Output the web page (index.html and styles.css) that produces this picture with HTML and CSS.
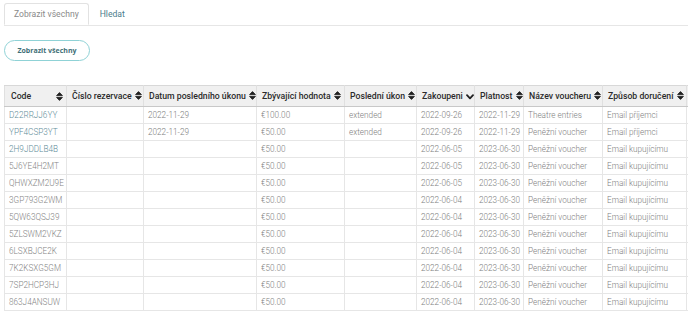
FILE: index.html
```html
<!DOCTYPE html>
<html lang="cs">
<head>
  <meta charset="UTF-8" />
  <title>Vouchery</title>
  <link rel="stylesheet" href="styles.css">
</head>
<body>
  <nav class="tabs">
    <a class="tab active" href="#">Zobrazit všechny</a>
    <a class="tab" href="#">Hledat</a>
  </nav>

  <div class="actions">
    <button class="btn-outline">Zobrazit všechny</button>
  </div>

  <div class="table-wrap">
    <table class="vouchers">
      <colgroup>
        <col style="width:62px"><col style="width:77px"><col style="width:113px"><col style="width:88px">
        <col style="width:72px"><col style="width:58px"><col style="width:49px"><col style="width:79px">
        <col style="width:84px"><col style="width:80px">
      </colgroup>
      <thead>
        <tr>
          <th class="code-head"><span>Code</span><i class="sort"></i></th>
          <th>Číslo rezervace <i class="sort"></i></th>
          <th>Datum posledního úkonu <i class="sort"></i></th>
          <th>Zbývající hodnota <i class="sort"></i></th>
          <th>Poslední úkon <i class="sort"></i></th>
          <th>Zakoupeni <i class="sort desc"></i></th>
          <th>Platnost <i class="sort"></i></th>
          <th>Název voucheru <i class="sort"></i></th>
          <th>Způsob doručení <i class="sort"></i></th>
          <th></th>
        </tr>
      </thead>
      <tbody id="rows"></tbody>
    </table>
  </div>

  <script>
    const rows = [
      ["D22RRJJ6YY", "", "2022-11-29", "€100.00", "extended", "2022-09-26", "2022-11-29", "Theatre entries", "Email příjemci"],
      ["YPF4CSP3YT", "", "2022-11-29", "€50.00", "extended", "2022-09-26", "2022-11-29", "Peněžní voucher", "Email příjemci"],
      ["2H9JDDLB4B", "", "", "€50.00", "", "2022-06-05", "2023-06-30", "Peněžní voucher", "Email kupujícímu"],
      ["5J6YE4H2MT", "", "", "€50.00", "", "2022-06-05", "2023-06-30", "Peněžní voucher", "Email kupujícímu"],
      ["QHWXZM2U9E", "", "", "€50.00", "", "2022-06-05", "2023-06-30", "Peněžní voucher", "Email kupujícímu"],
      ["3GP793G2WM", "", "", "€50.00", "", "2022-06-04", "2023-06-30", "Peněžní voucher", "Email kupujícímu"],
      ["5QW63QSJ39", "", "", "€50.00", "", "2022-06-04", "2023-06-30", "Peněžní voucher", "Email kupujícímu"],
      ["5ZLSWM2VKZ", "", "", "€50.00", "", "2022-06-04", "2023-06-30", "Peněžní voucher", "Email kupujícímu"],
      ["6LSXBJCE2K", "", "", "€50.00", "", "2022-06-04", "2023-06-30", "Peněžní voucher", "Email kupujícímu"],
      ["7K2KSXG5GM", "", "", "€50.00", "", "2022-06-04", "2023-06-30", "Peněžní voucher", "Email kupujícímu"],
      ["7SP2HCP3HJ", "", "", "€50.00", "", "2022-06-04", "2023-06-30", "Peněžní voucher", "Email kupujícímu"],
      ["863J4ANSUW", "", "", "€50.00", "", "2022-06-04", "2023-06-30", "Peněžní voucher", "Email kupujícímu"]
    ];

    const tbody = document.getElementById("rows");
    rows.forEach((r, n) => {
      const tr = document.createElement("tr");
      const codeClass = n < 3 ? "code new" : "code";
      tr.innerHTML = r.map((v, i) => `<td${i === 0 ? ` class="${codeClass}"` : ''}>${v}</td>`).join('') + '<td></td>';
      tbody.appendChild(tr);
    });

    const updown = '<svg width="7" height="9" viewBox="0 0 7 9"><path d="M3.5 0.6 L6.4 3.6 H0.6 Z M3.5 8.4 L6.4 5.4 H0.6 Z" fill="#222" stroke="#222" stroke-width="0.9" stroke-linejoin="round"/></svg>';
    const down = '<svg width="8" height="6" viewBox="0 0 8 6"><path d="M1 1.2 L4 4.4 L7 1.2" fill="none" stroke="#222" stroke-width="1.8" stroke-linecap="round" stroke-linejoin="round"/></svg>';
    document.querySelectorAll(".sort").forEach(el => {
      el.innerHTML = el.classList.contains("desc") ? down : updown;
    });
  </script>
</body>
</html>
```

FILE: styles.css
```css
body {
  margin: 0;
  font-family: Roboto, "Liberation Sans", Arial, sans-serif;
  background-color: #fff;
  color: #777;
  overflow: hidden;
}

.tabs {
  display: flex;
  margin: 3px 0 0 4px;
  border-bottom: 1px solid #e6e6e6;
  height: 22px;
}

.tab {
  display: block;
  padding: 0 9px;
  line-height: 22px;
  font-size: 8.6px;
  color: #8a8a8a;
  text-decoration: none;
}

.tab.active {
  border: 1px solid #e2e2e2;
  border-bottom-color: #fff;
  border-radius: 3px 3px 0 0;
  line-height: 21px;
  height: 22px;
  box-sizing: border-box;
  margin-bottom: -1px;
  background: #fff;
}

.tab + .tab {
  color: #4b7d8c;
  padding-left: 11px;
}

.actions {
  padding: 14px 0 0 4px;
}

.btn-outline {
  display: block;
  width: 86px;
  height: 21px;
  border: 1px solid #8fd2d6;
  border-radius: 11px;
  background: #fff;
  font-family: "Open Sans", Roboto, sans-serif;
  font-size: 7px;
  font-weight: bold;
  color: #3f6f77;
  padding: 0;
}

.table-wrap {
  margin: 24px 0 0 4px;
  overflow: hidden;
}

.vouchers {
  table-layout: fixed;
  border-collapse: collapse;
  width: 762px;
  font-size: 8.2px;
}

.vouchers th {
  background-color: #f0f0f0;
  color: #2b2b2b;
  font-family: Roboto, "Liberation Sans", Arial, sans-serif;
  font-weight: 500;
  font-size: 8.7px;
  text-align: left;
  height: 20px;
  padding: 0 3px 0 5px;
  white-space: nowrap;
  overflow: hidden;
  border: 1px solid #e0e0e0;
  border-top: 1px solid #d8d8d8;
  border-bottom: 1px solid #c8c8c8;
}

.vouchers th.code-head {
  padding: 0 3px 0 6px;
}

.code-head .sort {
  float: right;
  margin-top: 1px;
}

.sort {
  display: inline-block;
  vertical-align: -1px;
  margin-left: 1px;
}

.sort svg {
  display: block;
}

.vouchers td {
  height: 16px;
  padding: 0 4px;
  border: 1px solid #e6e6e6;
  white-space: nowrap;
  overflow: hidden;
  color: #808080;
  font-weight: 300;
}

.vouchers td.code {
  color: #858585;
  padding-left: 4px;
}

.vouchers td.code.new {
  color: #5f8d99;
}
```
